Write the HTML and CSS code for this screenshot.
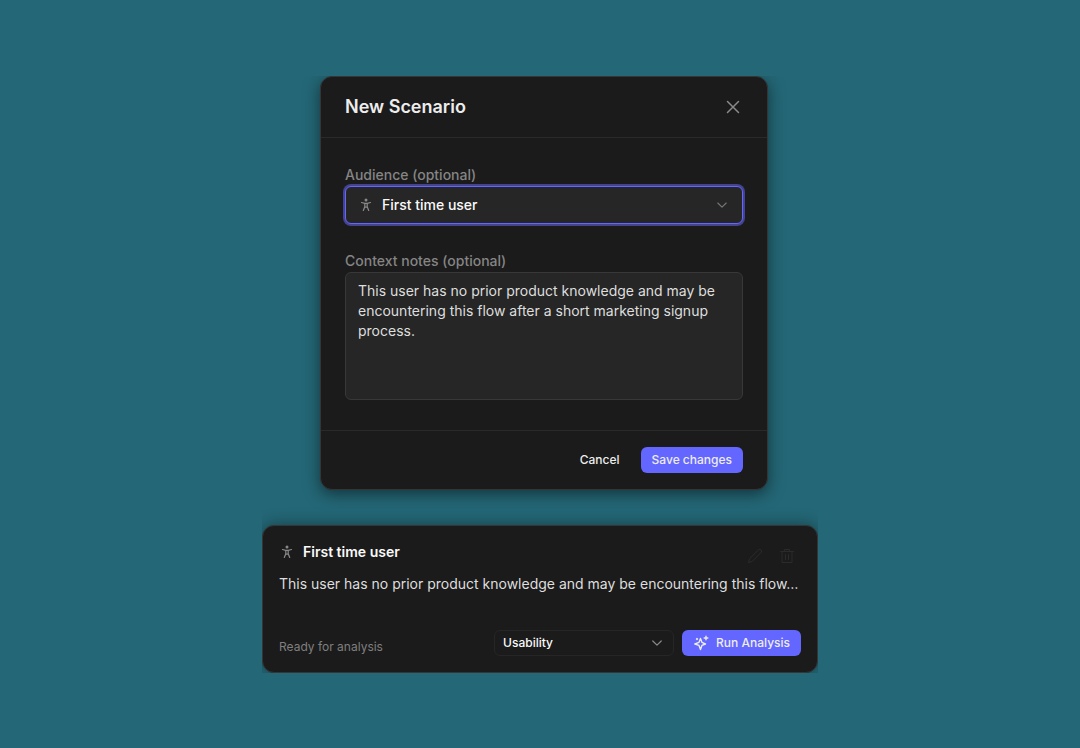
FILE: index.html
```html
<!DOCTYPE html>
<html lang="en">
<head>
<meta charset="utf-8">
<meta name="viewport" content="width=device-width, initial-scale=1">
<title>New Scenario</title>
<link rel="stylesheet" href="styles.css">
</head>
<body>
<main class="stage">
  <div class="modal-wrap">
    <form class="modal" role="dialog" aria-labelledby="modal-title">
      <header class="modal-header">
        <h1 class="modal-title" id="modal-title">New Scenario</h1>
        <button class="icon-button" type="button" aria-label="Close">
          <svg width="14" height="14" viewBox="0 0 14 14" fill="none" stroke="currentColor" stroke-width="1.5" stroke-linecap="round"><path d="M1.500 1.500l11 11M12.500 1.500l-11 11"/></svg>
        </button>
      </header>
      <div class="modal-body">
        <div class="field">
          <label class="label" for="audience">Audience (optional)</label>
          <div class="select-wrap">
            <svg class="select-icon" width="12" height="14" viewBox="0 0 12 14" fill="none" stroke="currentColor" stroke-width="1.2" stroke-linecap="round" stroke-linejoin="round"><circle cx="6" cy="2" r="0.900" fill="currentColor"/><path d="M1.500 4.500L4.800 5.300H7.200L10.500 4.500M4.800 5.300V8.700L3.300 12.500M7.200 5.300V8.700L8.700 12.500M4.800 9.200H7.200"/></svg>
            <select class="select select-focus" id="audience"><option>First time user</option></select>
            <svg class="chevron" width="10" height="10" viewBox="0 0 10 10" fill="none" stroke="currentColor" stroke-width="1.100" stroke-linecap="round" stroke-linejoin="round"><path d="M0.800 3L5 7.200L9.200 3"/></svg>
          </div>
        </div>
        <div class="field">
          <label class="label" for="notes">Context notes (optional)</label>
          <textarea class="textarea" id="notes">This user has no prior product knowledge and may be encountering this flow after a short marketing signup process.</textarea>
        </div>
      </div>
      <footer class="modal-footer">
        <button class="button button-ghost" type="button">Cancel</button>
        <button class="button button-primary" type="button">Save changes</button>
      </footer>
    </form>
  </div>

  <article class="card">
    <header class="card-header">
      <svg class="person" width="12" height="14" viewBox="0 0 12 14" fill="none" stroke="currentColor" stroke-width="1.2" stroke-linecap="round" stroke-linejoin="round"><circle cx="6" cy="2" r="0.900" fill="currentColor"/><path d="M1.500 4.500L4.800 5.300H7.200L10.500 4.500M4.800 5.300V8.700L3.300 12.500M7.200 5.300V8.700L8.700 12.500M4.800 9.200H7.200"/></svg>
      <h2 class="card-title">First time user</h2>
      <div class="card-actions">
        <button class="icon-button faint" type="button" aria-label="Edit">
          <svg width="16" height="16" viewBox="0 0 16 16" fill="none" stroke="currentColor" stroke-linejoin="round"><path d="M1.500 14.500L2.500 10.800L11.800 1.600Q13 0.800 14 1.900Q15.200 3 14.300 4.200L5.200 13.500Z"/></svg>
        </button>
        <button class="icon-button faint" type="button" aria-label="Delete">
          <svg width="16" height="16" viewBox="0 0 16 16" fill="none" stroke="currentColor" stroke-linecap="round" stroke-linejoin="round"><path d="M1.500 3.500H14.500M5.500 3.500V1.500H10.500V3.500M3 3.500V14.500H13V3.500M6.500 6.500V11.500M9.500 6.500V11.500"/></svg>
        </button>
      </div>
    </header>
    <p class="card-text">This user has no prior product knowledge and may be encountering this flow…</p>
    <footer class="card-footer">
      <span class="status">Ready for analysis</span>
      <div class="select-wrap small-wrap">
        <select class="select select-small" aria-label="Analysis type"><option>Usability</option></select>
        <svg class="chevron chevron-small" width="10" height="10" viewBox="0 0 10 10" fill="none" stroke="currentColor" stroke-width="1.200" stroke-linecap="round" stroke-linejoin="round"><path d="M0.800 3L5 7.200L9.200 3"/></svg>
      </div>
      <button class="button button-primary" type="button">
        <svg width="16" height="16" viewBox="0 0 16 16" fill="none" stroke="currentColor" stroke-width="1.400" stroke-linecap="round" stroke-linejoin="round"><path d="M7.500 3.500L8.900 7.300L12.500 9L8.900 10.400L7.500 14.500L6 10.400L1.800 9L6 7.300ZM13 1.200V4.800M11.200 3H14.800M4 3.500V4.500M3.500 4H4.500"/></svg>
        Run Analysis
      </button>
    </footer>
  </article>
</main>
</body>
</html>
```
FILE: styles.css
```css
* {
  box-sizing: border-box;
}

body {
  margin: 0;
  min-height: 100vh;
  background: #246776;
  color: #ededed;
  font-family: Inter, "Liberation Sans", sans-serif;
  font-size: 14px;
  line-height: 20px;
}

button,
select,
textarea {
  font: inherit;
  color: inherit;
  margin: 0;
}

.stage {
  display: flex;
  flex-direction: column;
  gap: 35px;
  max-width: 556px;
  margin: 0 auto;
  padding: 76px 0;
}

.modal-wrap {
  display: flex;
  justify-content: center;
  padding-left: 8px;
}

.modal {
  width: 100%;
  max-width: 448px;
  border: 1px solid #353535;
  border-radius: 12px;
  background: #1b1b1b;
  box-shadow: 0 4px 16px rgba(0, 0, 0, 0.5);
  clip-path: inset(0 -40px -40px -40px);
}

.modal-header {
  display: flex;
  align-items: center;
  justify-content: space-between;
  padding: 16px 24px;
  border-bottom: 1px solid #2a2a2a;
}

.modal-title {
  margin: 0;
  font-size: 18px;
  line-height: 28px;
  font-weight: 600;
}

.icon-button {
  display: flex;
  align-items: center;
  justify-content: center;
  width: 20px;
  height: 20px;
  padding: 0;
  border: 0;
  background: none;
  color: #8a8a8a;
}

.modal-body {
  display: grid;
  gap: 27px;
  padding: 27px 24px 30px;
}

.field {
  display: grid;
  gap: 1px;
}

.label {
  color: #858585;
  font-weight: 500;
}

.select-wrap {
  position: relative;
}

.select {
  display: block;
  width: 100%;
  height: 38px;
  padding: 0 36px;
  border: 1px solid #2a2a2a;
  border-radius: 6px;
  appearance: none;
  background: #262626;
  color: #fafafa;
  font-weight: 500;
}

.select-focus {
  border-color: #6366ff;
  box-shadow: 0 0 0 2px #43438f;
  outline: none;
}

.select-icon {
  position: absolute;
  left: 15px;
  top: 12px;
  color: #8a8a8a;
}

.chevron {
  position: absolute;
  right: 16px;
  top: 14px;
  color: #777;
  pointer-events: none;
}

.textarea {
  display: block;
  width: 100%;
  height: 128px;
  padding: 8px 12px;
  border: 1px solid #383838;
  border-radius: 6px;
  background: #262626;
  color: #dedede;
  resize: none;
}

.modal-footer {
  display: flex;
  justify-content: flex-end;
  gap: 10px;
  padding: 16px 24px;
  border-top: 1px solid #2a2a2a;
}

.button {
  display: flex;
  align-items: center;
  gap: 7px;
  height: 26px;
  padding: 0 11px;
  border: 0;
  border-radius: 6px;
  background: none;
  font-size: 12px;
  font-weight: 500;
}

.button-primary {
  background: #6366ff;
}

.card {
  padding: 16px 16px 15px;
  border: 1px solid #353535;
  border-radius: 12px;
  background: #1b1b1b;
  box-shadow: 0 0 16px rgba(0, 0, 0, 0.4);
  clip-path: inset(-30px 0 0 0);
}

.card-header {
  display: flex;
  align-items: flex-start;
  height: 32px;
}

.person {
  margin: 3px 10px 0 2px;
  color: #8a8a8a;
}

.card-title {
  flex: 1;
  margin: 0;
  color: #fafafa;
  font-size: 14px;
  font-weight: 600;
}

.card-actions {
  display: flex;
  gap: 12px;
  padding: 4px;
}

.faint {
  color: #2b2b2b;
}

.card-text {
  margin: 0 0 35px;
  color: #dedede;
}

.card-footer {
  display: flex;
  align-items: center;
  gap: 8px;
}

.status {
  flex: 1;
  padding-top: 8px;
  color: #7f7f7f;
  font-size: 12px;
}

.small-wrap {
  flex: 0 0 180px;
}

.select-small {
  height: 26px;
  padding: 0 8px;
  border-color: #262626;
  background: #1b1b1b;
  font-size: 12px;
}

.chevron-small {
  right: 12px;
  top: 8px;
  color: #8a8a8a;
}
```
